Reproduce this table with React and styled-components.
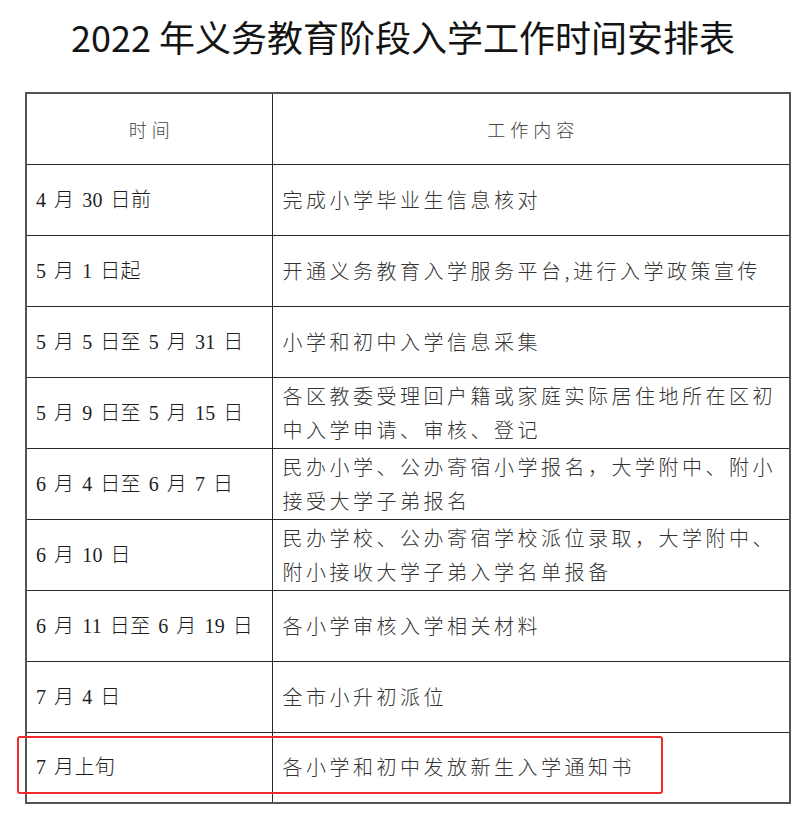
import React from 'react';
import styled, { createGlobalStyle } from 'styled-components';

const GlobalStyle = createGlobalStyle`
  html, body { margin: 0; padding: 0; background: #ffffff; }
  * { box-sizing: border-box; }
`;

const Page = styled.div`
  width: 806px;
  min-height: 816px;
  padding-top: 14px;
  background: #ffffff;
`;

const Title = styled.h1`
  margin: 0;
  font-family: "Noto Sans CJK SC", "Noto Sans", sans-serif;
  font-size: 36px;
  line-height: 44px;
  font-weight: 400;
  color: #141414;
  text-align: center;
`;

const TableWrap = styled.div`
  position: relative;
  width: 764px;
  margin: 34px 0 0 25px;
`;

const Table = styled.table`
  width: 764px;
  border-collapse: collapse;
  table-layout: fixed;
  border: 2px solid #555;
`;

const Row = styled.tr`
  height: 71px;
`;

const Cell = styled.td`
  border: 1px solid #2a2a2a;
  padding: 0;
  vertical-align: middle;
  height: 71px;
`;

const HeadCell = styled(Cell).attrs({ as: 'th' })`
  font-family: "Noto Sans CJK SC", sans-serif;
  font-weight: 300;
  font-size: 18px;
  letter-spacing: 5px;
  padding-left: 5px;
  color: #444;
  text-align: center;
`;

const TimeCell = styled(Cell)`
  font-family: "Liberation Serif", "Noto Sans CJK SC", serif;
  font-weight: 300;
  font-size: 20px;
  line-height: 34px;
  letter-spacing: 0.3px;
  word-spacing: 2.5px;
  color: #1e1e1e;
  padding-left: 9px;
  white-space: nowrap;
`;

const WorkCell = styled(Cell)`
  font-family: "Noto Sans CJK SC", sans-serif;
  font-weight: 300;
  font-size: 20px;
  line-height: 34px;
  letter-spacing: 3.5px;
  color: #333;
  padding: 0 6px 0 10px;
`;

const Highlight = styled.div`
  position: absolute;
  left: -8px;
  top: 644px;
  width: 646px;
  height: 58px;
  border: 2px solid #f02b2b;
  border-radius: 3px;
  pointer-events: none;
`;

const rows = [
  ['4 月 30 日前', '完成小学毕业生信息核对'],
  ['5 月 1 日起', '开通义务教育入学服务平台,进行入学政策宣传'],
  ['5 月 5 日至 5 月 31 日', '小学和初中入学信息采集'],
  ['5 月 9 日至 5 月 15 日', '各区教委受理回户籍或家庭实际居住地所在区初中入学申请、审核、登记'],
  ['6 月 4 日至 6 月 7 日', '民办小学、公办寄宿小学报名，大学附中、附小接受大学子弟报名'],
  ['6 月 10 日', '民办学校、公办寄宿学校派位录取，大学附中、附小接收大学子弟入学名单报备'],
  ['6 月 11 日至 6 月 19 日', '各小学审核入学相关材料'],
  ['7 月 4 日', '全市小升初派位'],
  ['7 月上旬', '各小学和初中发放新生入学通知书'],
];

export default function App() {
  return (
    <>
      <GlobalStyle />
      <Page>
        <Title>2022 年义务教育阶段入学工作时间安排表</Title>
        <TableWrap>
          <Table>
            <colgroup>
              <col style={{ width: 246 }} />
              <col style={{ width: 518 }} />
            </colgroup>
            <thead>
              <Row>
                <HeadCell>时间</HeadCell>
                <HeadCell>工作内容</HeadCell>
              </Row>
            </thead>
            <tbody>
              {rows.map(([time, work]) => (
                <Row key={time}>
                  <TimeCell>{time}</TimeCell>
                  <WorkCell>{work}</WorkCell>
                </Row>
              ))}
            </tbody>
          </Table>
          <Highlight />
        </TableWrap>
      </Page>
    </>
  );
}
